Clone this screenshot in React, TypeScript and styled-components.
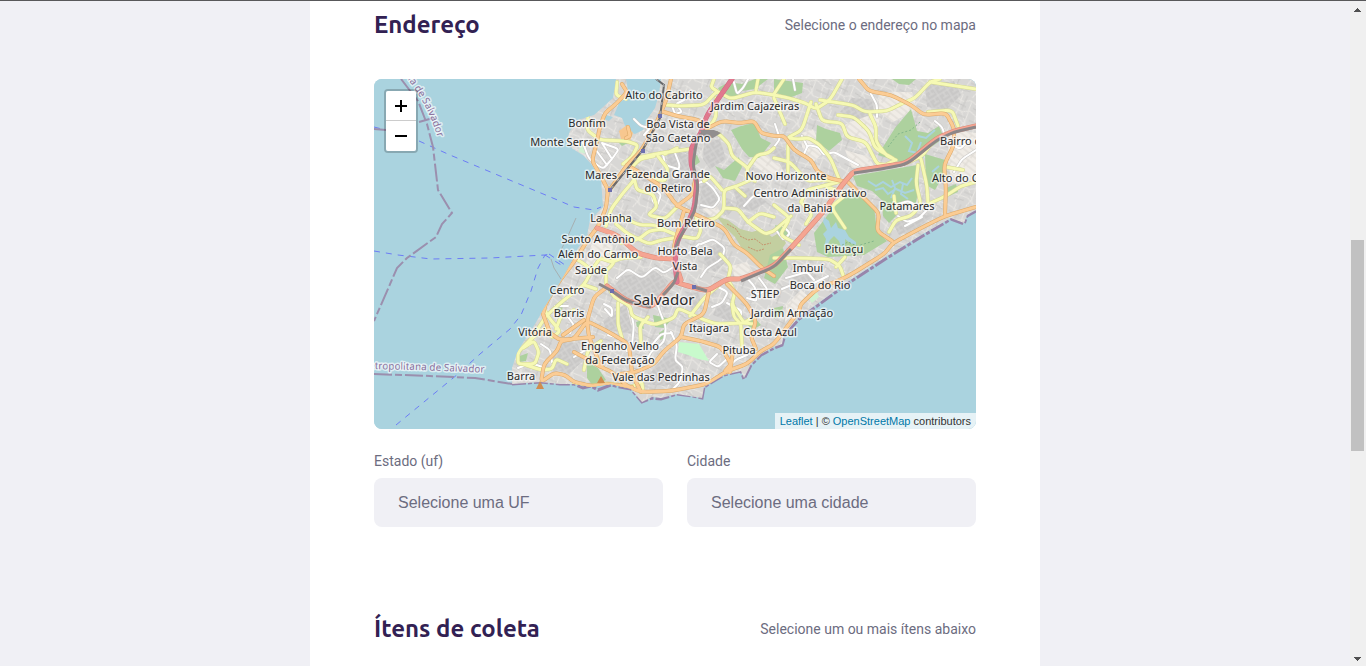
import React from "react";
import styled, { createGlobalStyle } from "styled-components";

const GlobalStyle = createGlobalStyle`
  *, *::before, *::after { box-sizing: border-box; }
  body {
    margin: 0;
    background: #f0f0f5;
    color: #6c6c80;
    font-family: Roboto, sans-serif;
    -webkit-font-smoothing: antialiased;
  }
`;

const Page = styled.div`
  display: flex;
  min-height: 100vh;
  border-top: 1px solid #58585a;
`;

const Main = styled.main`
  flex: 1;
  display: flex;
  justify-content: center;
`;

const Form = styled.form`
  width: 100%;
  max-width: 730px;
  padding: 10px 64px 0;
  background: #fff;
`;

const Section = styled.section`
  display: flow-root;
  margin-bottom: 64px;

  &:last-child {
    margin-bottom: 0;
    padding-bottom: 22px;
  }
`;

const SectionHeader = styled.header`
  display: flex;
  justify-content: space-between;
  align-items: center;
  height: 28px;
`;

const Title = styled.h2`
  margin: 0;
  color: #322153;
  font: 700 24px/28px Ubuntu, "Noto Sans", sans-serif;
`;

const Hint = styled.span`
  font-size: 14px;
  line-height: 16px;
`;

const MapFrame = styled.div`
  position: relative;
  height: 350px;
  margin: 40px 0 24px;
  border-radius: 8px;
  overflow: hidden;
  background: #aad3df;
`;

const MapDrawing = styled.svg`
  display: block;
  width: 100%;
  height: 100%;
`;

const ZoomControl = styled.div`
  position: absolute;
  top: 10px;
  left: 10px;
  border: 2px solid rgba(0, 0, 0, 0.2);
  border-radius: 4px;
  background-clip: padding-box;
`;

const ZoomLink = styled.a`
  display: flex;
  align-items: center;
  justify-content: center;
  width: 30px;
  height: 30px;
  background: #fff;
  color: #000;
  text-decoration: none;

  &:first-child {
    border-bottom: 1px solid #ccc;
    border-radius: 2px 2px 0 0;
  }

  &:last-child {
    border-radius: 0 0 2px 2px;
  }
`;

const Attribution = styled.div`
  position: absolute;
  right: 0;
  bottom: 0;
  padding: 0 5px;
  background: rgba(255, 255, 255, 0.7);
  color: #333;
  font: 11px/16px "Liberation Sans", Arial, sans-serif;

  a {
    color: #0078a8;
    text-decoration: none;
  }
`;

const FieldGroup = styled.div`
  display: flex;
  gap: 24px;
  margin-bottom: 24px;
`;

const Field = styled.div`
  flex: 1;
  display: flex;
  flex-direction: column;
  gap: 8px;

  label {
    font-size: 14px;
    line-height: 17px;
  }
`;

const Select = styled.select`
  appearance: none;
  width: 100%;
  height: 49px;
  padding: 0 24px;
  border: 0;
  border-radius: 8px;
  background: #f0f0f5;
  color: #6c6c80;
  font: 16px "Liberation Sans", Arial, sans-serif;
`;

const Scrollbar = styled.div`
  display: flex;
  flex-direction: column;
  align-items: center;
  width: 16px;
  padding: 7px 2px 5px 1px;
  background: #f0f0f0;
`;

const Track = styled.div`
  flex: 1;
  display: grid;
  grid-template-rows: 228fr 211fr 206fr;
  width: 100%;
`;

const Thumb = styled.div`
  grid-row: 2;
  background: #c1c1c1;
`;

const Arrow = ({ down }: { down?: boolean }) => (
  <svg width="7" height="4" viewBox="0 0 7 4" shapeRendering="crispEdges" aria-hidden="true">
    <path d={down ? "M0 0h7v1h-1v1h-1v1h-1v1h-1v-1h-1v-1h-1v-1h-1z" : "M3 0h1v1h1v1h1v1h1v1h-7v-1h1v-1h1v-1h1z"} fill="#505050" />
  </svg>
);

const LAND =
  "M616 79 L613 98 602 108 594 115 578 120 570 131 566 142 573 149 584 156 592 165 601 179 603 207 590 220 587 236 578 248 570 265 557 288 546 305 535 324 524 341 517 353 512 368 512 384 526 383 541 382 560 384 574 384 591 387 611 384 631 389 642 402 652 397 661 398 677 394 702 398 704 387 724 375 741 371 744 378 751 364 761 354 774 347 782 344 784 334 799 317 817 304 847 282 887 256 921 235 951 218 964 223 967 215 976 210 976 79 Z";

const COAST_LINE =
  "M512 384 L541 382 560 384 574 384 583 388 591 386 598 390 611 385 620 387 631 389 642 402 652 398 661 399 677 394 692 396 702 398 704 387 724 375 741 371 744 379 751 365 761 355 774 348 782 345 785 335 799 319 817 306 847 284 887 258 921 237 951 219 964 224 967 216 976 211";

const WATERS = [
  "M626 79 L661 79 659 94 655 108 648 118 643 130 635 134 627 131 622 118 614 115 619 103 629 96 Z",
  "M606 115 L613 117 609 121 604 119 Z",
  "M824 217 l5 4 2 7 5 -6 2 6 7 2 4 7 7 5 0 3 -6 -2 -5 -4 0 8 -3 3 -3 -9 -5 -5 -4 4 -3 6 -3 2 2 -9 -3 -5 4 -4 -4 -8 z",
];

const WOODS = [
  "M731 130 L741 126 754 123 761 138 771 143 759 158 749 157 742 149 735 137 Z",
  "M715 166 L724 170 739 157 742 167 735 181 723 178 Z",
  "M817 125 L826 129 840 133 842 140 829 151 816 141 Z",
  "M911 109 L917 131 928 133 939 126 944 138 920 155 903 163 878 155 883 147 895 128 Z",
  "M853 176 L917 165 919 185 916 203 886 204 872 191 857 186 Z",
  "M925 154 L945 160 943 176 935 190 926 185 Z",
  "M839 200 L853 192 874 207 877 231 887 241 864 255 828 257 817 252 814 233 Z",
  "M587 362 L598 368 606 380 593 386 587 378 Z",
  "M774 79 L803 83 802 93 789 98 774 92 Z",
  "M892 79 L916 79 909 85 899 84 Z",
  "M718 88 L729 82 742 84 755 79 768 79 755 89 742 91 733 99 724 98 Z",
  "M770 255 L783 248 788 267 775 284 764 278 Z",
  "M619 143 L625 139 628 143 622 146 Z",
  "M659 333 L665 329 666 337 660 340 Z",
  "M636 322 L642 320 644 329 637 327 Z",
  "M653 315 L672 319 664 328 655 327 Z",
  "M556 305 L563 304 562 311 556 311 Z",
  "M520 356 L528 353 526 361 519 362 Z",
  "M744 321 L754 317 761 325 752 330 Z",
  "M774 308 L783 306 782 314 774 319 Z",
  "M946 188 L956 184 958 192 949 196 Z",
  "M882 203 L892 204 896 216 889 223 883 216 Z",
  "M690 157 L697 155 700 162 693 167 Z",
  "M775 225 L788 228 790 237 778 236 Z",
];

const SCRUB = [
  "M716 216 L728 220 740 229 752 232 762 229 772 237 780 232 786 243 776 258 766 269 754 259 744 252 735 237 724 226 Z",
];

const OPEN_LAND = [
  "M748 160 L762 151 775 163 789 165 779 174 763 172 Z",
  "M802 133 L813 129 824 152 812 163 802 147 Z",
  "M843 126 L868 113 880 118 874 145 860 149 852 137 Z",
  "M880 92 L912 92 917 109 893 122 878 112 Z",
  "M949 130 L976 133 976 180 952 184 948 160 Z",
  "M845 150 L869 157 874 166 852 168 Z",
  "M731 266 L747 262 754 274 735 278 Z",
  "M617 300 L630 309 633 325 622 322 Z",
  "M698 205 L714 202 722 214 714 219 Z",
  "M786 305 L801 290 808 296 797 311 785 322 Z",
  "M593 240 L613 245 610 266 585 266 Z",
  "M583 139 L589 143 583 149 Z",
];

const DENSE = [
  "M632 163 L643 168 654 184 642 181 Z",
  "M667 148 L688 155 690 184 680 197 668 188 Z",
  "M704 142 L720 139 726 159 710 169 703 159 Z",
  "M609 293 L622 276 655 271 668 281 661 297 644 303 626 300 Z",
  "M703 181 L718 193 716 207 699 209 Z",
  "M733 190 L749 188 767 202 752 211 739 208 Z",
  "M654 368 L670 351 682 361 686 378 665 386 643 384 Z",
  "M603 321 L626 303 633 334 606 330 Z",
  "M771 147 L792 151 798 167 783 170 Z",
  "M852 98 L871 99 875 113 854 121 840 112 Z",
  "M925 85 L954 81 961 95 946 110 927 107 Z",
  "M552 355 L560 341 577 343 584 360 569 374 553 369 Z",
  "M686 292 L699 293 702 307 692 312 Z",
  "M717 304 L735 303 744 317 729 321 713 315 Z",
  "M707 248 L721 242 728 260 715 272 703 263 Z",
  "M893 224 L914 213 933 216 917 228 899 235 Z",
  "M792 278 L807 271 819 276 803 287 Z",
  "M720 213 L726 198 735 207 728 216 Z",
];

const STREETS = [
  "M583 143 L589 159 603 169 612 159 619 149 602 143 M602 143 L612 159 M593 146 L607 165",
  "M634 119 L641 126 650 128 644 135",
  "M672 106 L675 114 682 112 676 104 684 100 M733 79 L737 94 743 88 748 79",
  "M698 183 L705 181 713 188 720 199 713 208 701 205",
  "M654 188 L652 200 657 206 661 195 656 190",
  "M744 206 L753 196 764 194",
  "M804 154 L808 145 818 147 824 155 834 152 845 158 858 165",
  "M871 94 L877 105 877 117 M935 121 L942 127 945 136",
  "M976 150 L962 159 954 172 M947 142 L960 149 968 141",
  "M617 278 L628 269 642 278 655 267 664 273 675 266",
  "M628 302 L634 325 632 345 M656 300 L660 312 666 327 664 342 651 352 646 362",
  "M671 332 L677 345 675 360 683 367 680 382 672 390",
  "M714 285 L728 292 722 303 712 307 M727 303 L742 311 738 324",
  "M604 304 L612 308 612 317 605 309 M541 344 L550 350 552 362 M518 368 L531 363 548 369",
  "M717 354 L709 362 718 367 727 359 M747 355 L735 360 724 374",
  "M701 244 L713 239 725 248 722 259 707 268 701 277 M689 253 L699 244",
  "M781 224 L790 233 785 239 M775 229 L783 239",
  "M896 205 L908 201 919 207 M898 216 L907 222 919 218 926 211 M905 226 L922 217",
  "M782 289 L796 283 812 284 828 276 M786 278 L807 272 814 280",
  "M568 317 L574 325 570 333 M574 357 L584 351 M555 306 L568 306",
  "M675 153 L680 166 674 178 M663 154 L665 165 678 169",
  "M745 276 L755 287 757 301 747 298 M759 278 L768 290 758 294",
  "M608 335 L622 339 627 351 M652 345 L661 334 672 333",
  "M802 136 L807 146 M775 124 L780 139 774 147 M793 79 L795 90",
];

const YELLOW = [
  "M617 82 L616 95 626 99 M588 115 L587 130 600 140 626 141 638 145 632 157 623 164",
  "M666 105 L680 106 704 105 717 91 731 99 755 92 774 95 M714 79 L711 87 718 92 M758 79 L756 90",
  "M704 133 L718 133 729 144 732 156 748 168 746 177 755 181 M704 133 L716 118 716 98",
  "M748 168 L757 155 768 153 774 148 M755 178 L737 186 724 190 724 210 715 219 696 220",
  "M724 208 L738 209 748 222 765 234 774 231 791 216 M748 222 L760 213 774 217",
  "M654 156 L640 159 630 169 635 179 623 193 611 209 606 226 M636 158 L661 153 676 151 690 149",
  "M658 156 L668 169 665 181 650 178 M634 178 L637 190 653 194 657 207 648 215 665 219 678 206",
  "M606 222 L620 216 639 225 655 225 675 235 697 239 701 230 696 217",
  "M774 95 L789 98 805 103 816 109 830 100 842 79 M811 102 L802 130 787 138 798 139 809 138 820 145 831 159 839 179",
  "M816 104 L822 121 842 123 847 137 866 142 877 164 887 165 M820 100 L853 105 865 112 887 111 901 104",
  "M838 115 L854 117 869 131 875 148 896 160 887 164 M774 98 L785 124 M870 114 L876 127 876 142 887 156 896 160",
  "M901 104 L915 98 930 82 940 79 M930 82 L976 89 M928 112 L952 110 958 126",
  "M907 163 L922 156 932 143 M918 165 L916 183 921 205 911 216 896 220 889 232 M921 159 L927 186 928 204 M946 167 L963 170",
  "M928 204 L944 197 961 186 976 182 M896 213 L894 196 M774 158 L790 162 807 181 822 180 842 181 M788 173 L788 145",
  "M842 181 L827 185 807 190 801 202 M801 202 L812 214 806 224 M774 205 L790 218 780 235 799 245",
  "M565 254 L580 261 592 270 605 272 614 263 611 252 M592 270 L584 285 565 299 546 316 532 338 518 352 518 364 535 364 539 352 534 341 523 348",
  "M607 285 L614 297 630 306 632 316 654 325 674 318 678 308 702 319 716 324 744 323 754 324",
  "M618 303 L618 325 622 338 M544 309 L550 319 560 331 552 338 546 327 530 340 M574 310 L561 316 556 329",
  "M523 364 L541 370 552 369 556 359 567 364 M574 384 L591 386 608 383 631 387 642 382 643 392 M584 370 L588 350 601 341",
  "M720 254 L731 266 728 280 735 292 732 304 744 323 750 319 M732 304 L734 317 741 324 742 347",
  "M774 258 L799 258 829 259 840 266 844 278 M845 257 L836 267 M648 317 L640 326 641 344",
  "M616 224 L628 234 649 244 662 240 674 238 M677 235 L662 229 649 231 639 239 621 243",
  "M704 181 L710 176 722 190 M735 187 L745 196 M665 154 L677 148",
  "M784 79 L774 94 M845 228 L831 207 847 194 827 187",
  "M592 270 L600 258 612 262 622 258 641 257 M606 272 L606 285 M584 285 L596 289 M690 316 L704 298 720 284",
];

const ORANGE = [
  "M622 84 L627 92 617 103 605 113 600 127 597 141 592 161 602 178 608 190 606 208 599 225 587 241 574 262 560 280 546 303 543 314",
  "M671 79 L666 101 654 128 641 151 627 165 611 188",
  "M664 112 L677 116 699 120 706 129 722 121 740 123 754 121 761 133 774 136 784 136 794 150 811 160 817 171 829 178 842 181",
  "M627 165 L644 175 664 188 677 206 697 215 724 228 734 245 747 253 761 267 774 276",
  "M677 206 L692 195 695 181 M684 211 L674 245 675 258",
  "M859 79 L869 91 891 95 911 105 924 115 946 113 954 128 954 145 944 165 946 188 945 214",
  "M847 181 L864 198 879 213 877 231 892 241",
  "M976 207 L945 216 921 228 893 243 884 254 847 277 817 289 801 304 799 311 774 344 761 351 747 364 727 371 707 384 671 391 641 392 627 386 612 372 601 367 589 337 587 321 594 297 607 287",
  "M632 387 L610 384 591 386 574 382 565 375 554 373 541 382 544 364 557 351 561 341 574 339 587 321 607 331 629 344 632 374 641 392",
  "M620 374 L636 372 654 364 664 351 681 337 684 324 704 314 709 291",
  "M681 337 L701 341 721 347 731 364 725 371 M733 350 L730 373",
  "M727 284 L747 304 756 321 751 337 756 349",
  "M543 314 L550 333 560 340 593 337 M529 334 L550 333 M563 335 L584 320",
  "M574 352 L587 359 601 367 M626 138 L630 136 628 127",
];

const SALMON = [
  "M597 228 L617 235 637 253 656 258 674 259 681 280",
  "M976 126 L954 131 937 138 907 163 881 167 854 171 842 185 824 211 791 248 774 266 741 279 727 279 707 291 681 284 674 281 661 297 651 307 627 301 607 286",
];

const MOTORWAY = ["M732 79 L707 115 701 133 691 148 691 165 697 181 694 211 677 241 675 264 677 282"];

const TRANSIT = [
  "M701 133 L696 144 693 165 698 186 695 211 679 239 675 250 M701 133 L718 133",
  "M976 127 L954 132 937 140 907 164 881 169 854 173 M791 249 L774 267 741 281 M707 291 L694 287 M678 272 L674 283 663 295 M651 307 L627 301 612 291 599 284",
];

const RAIL = "M656 79 L664 85 660 118 642 151 610 190";

const STATIONS: [number, number][] = [[660, 116], [643, 151], [610, 190], [612, 291], [694, 287]];

const STREAMS =
  "M868 181 l8 5 7 -4 8 5 9 -5 7 3 5 -7 M875 190 l8 -2 5 6 8 -5 9 4 9 -3 M892 180 l3 8 -4 10 M903 184 l-2 10 7 5 M905 136 l7 7 -3 8 8 2 M921 142 l-3 8 5 8 M935 130 l-9 8 -8 -2 M932 172 l7 -6";

const FERRIES = [
  "M374 127 L386 130 M419 141 L450 155 500 176 548 196 574 207 594 210 601 207",
  "M374 251 L398 255 431 259 490 258 545 255 551 254 M545 255 L563 266",
  "M396 425 L430 397 458 374 480 354 510 329 521 315 531 291 538 268 545 255",
  "M549 254 L565 265",
];

const BORDERS = [
  "M401 79 L418 101 427 124 433 147 438 190 452 213 442 224 436 237 407 258 397 268 374 321",
  "M374 374 L430 376 475 378 512 384",
  "M374 129 L386 130 M419 122 L433 118",
];

const LABELS: [string, number, number][] = [
  ["Alto do Cabrito", 664, 99],
  ["Jardim Cajazeiras", 755, 110],
  ["Bonfim", 587, 127],
  ["Boa Vista de", 678, 128],
  ["São Caetano", 678, 142],
  ["Monte Serrat", 564, 146],
  ["Mares", 601, 179],
  ["Fazenda Grande", 668, 178],
  ["do Retiro", 668, 192],
  ["Novo Horizonte", 786, 180],
  ["Centro Administrativo", 810, 197],
  ["da Bahia", 810, 212],
  ["Patamares", 907, 210],
  ["Lapinha", 611, 222],
  ["Bom Retiro", 686, 227],
  ["Santo Antônio", 598, 243],
  ["Além do Carmo", 598, 258],
  ["Saúde", 591, 274],
  ["Horto Bela", 685, 255],
  ["Vista", 685, 270],
  ["Pituaçu", 844, 253],
  ["Imbuí", 808, 272],
  ["Centro", 567, 294],
  ["Boca do Rio", 820, 289],
  ["STIEP", 765, 298],
  ["Barris", 569, 317],
  ["Jardim Armação", 792, 317],
  ["Vitória", 535, 336],
  ["Itaigara", 709, 332],
  ["Costa Azul", 770, 336],
  ["Engenho Velho", 620, 350],
  ["da Federação", 620, 364],
  ["Pituba", 739, 354],
  ["Barra", 521, 380],
  ["Vale das Pedrinhas", 661, 381],
];

const Label = styled.text<{ $size?: number; $tone?: string }>`
  fill: ${(p) => p.$tone ?? "#2b2b2b"};
  font-family: "Noto Sans", sans-serif;
  font-size: ${(p) => p.$size ?? 11}px;
  stroke: rgba(255, 255, 255, 0.6);
  stroke-width: 3px;
  stroke-linejoin: round;
  paint-order: stroke;
`;

/** Rounds the corners of "M x y L x y x y ..." polylines with quadratic curves. */
function smooth(paths: string[]) {
  return paths
    .join(" ")
    .split("M")
    .filter((part) => part.trim())
    .map((part) => {
      const n = (part.match(/-?\d+/g) ?? []).map(Number);
      const last = n.length - 2;
      let d = `M${n[0]} ${n[1]}`;
      for (let i = 2; i < last; i += 2) {
        // Straight to a quarter before the corner, then round it.
        const ax = n[i] + (n[i - 2] - n[i]) / 4;
        const ay = n[i + 1] + (n[i - 1] - n[i + 1]) / 4;
        const bx = n[i] + (n[i + 2] - n[i]) / 4;
        const by = n[i + 1] + (n[i + 3] - n[i + 1]) / 4;
        d += `L${ax} ${ay}Q${n[i]} ${n[i + 1]} ${bx} ${by}`;
      }
      return `${d}L${n[last]} ${n[last + 1]}`;
    })
    .join("");
}

function Shapes({ paths, fill }: { paths: string[]; fill: string }) {
  return <path d={paths.join(" ")} fill={fill} />;
}

function Roads({ paths, casing, color, width }: { paths: string[]; casing: string; color: string; width: number }) {
  const d = smooth(paths);
  return (
    <g fill="none" strokeLinecap="round" strokeLinejoin="round">
      <path d={d} stroke={casing} strokeWidth={width + 1} />
      <path d={d} stroke={color} strokeWidth={width} />
    </g>
  );
}

function CityMap() {
  return (
    <MapDrawing viewBox="374 79 602 350" preserveAspectRatio="xMidYMid slice" role="img" aria-label="Mapa de Salvador">
      <defs>
        <pattern id="blocks" width="38" height="34" patternUnits="userSpaceOnUse" patternTransform="rotate(24)">
          <rect width="38" height="34" fill="#d8d7d5" />
          <path d="M0 5 L9 7 16 3 27 6 38 5 M0 15 L12 17 19 13 31 17 38 15 M0 27 L14 25 22 29 38 27 M6 0 L8 17 4 34 M17 3 L19 25 16 34 M29 0 L27 17 31 34 M12 17 L22 29 M27 6 L38 15" fill="none" stroke="#eae8e4" />
          <path d="M2 10 L14 11 M21 9 L35 12 M9 21 L18 21 M22 22 L36 22 M2 31 L12 29 M11 0 L11 15 M34 16 L35 30" fill="none" stroke="#c8c7c5" />
        </pattern>
        <pattern id="alleys" width="11" height="9" patternUnits="userSpaceOnUse" patternTransform="rotate(-32)">
          <rect width="11" height="9" fill="#c9c8c7" />
          <path d="M0 2 H11 M0 7 H6 M3 2 V7 M8 0 V9" fill="none" stroke="#d8d7d5" />
        </pattern>
        <pattern id="dunes" width="13" height="11" patternUnits="userSpaceOnUse" patternTransform="rotate(38)">
          <path d="M0 3 H13 M4 3 V11 M0 8 H13" fill="none" stroke="#dcd8d2" />
        </pattern>
        <clipPath id="land">
          <path d={LAND} />
        </clipPath>
        <path id="baia" d="M405 76 Q430 106 440 146" />
        <path id="regiao" d="M369 369 L420 370 490 373" />
      </defs>

      <rect x="374" y="79" width="602" height="350" fill="#aad3df" />
      <path d="M576 218 L567 238 560 252 M551 259 L554 268 561 279" fill="none" stroke="#a6b0b2" />
      <path d={COAST_LINE} fill="none" stroke="#9885ab" strokeWidth="3" strokeDasharray="14 2 4 2" />
      <path d={LAND} fill="url(#blocks)" />

      <g clipPath="url(#land)">
        <Shapes paths={OPEN_LAND} fill="#f0ece6" />
        <Shapes paths={OPEN_LAND} fill="url(#dunes)" />
        <Shapes paths={DENSE} fill="url(#alleys)" />
        <Shapes paths={SCRUB} fill="#c3cfa0" />
        <Shapes paths={WOODS} fill="#add19e" />
        <path d="M679 342 L699 344 709 361 698 359 688 355 678 352 Z" fill="#c8facc" />
        <path d="M580 143 L586 147 587 154 579 152 Z M808 298 L817 292 819 297 812 303 Z" fill="#d0f2d2" />
        <Shapes paths={WATERS} fill="#aad3df" />
        <path d={STREAMS} fill="none" stroke="#aad3df" strokeWidth="2" />
        <path d="M740 236 l8 4 7 -1 8 6 8 -2 M748 247 l9 4 7 -2 M727 224 l9 5 4 6" fill="none" stroke="#c5936d" strokeDasharray="2 1" />
        <path d="M835 249 l13 -7 9 4 17 -5 M920 122 l-9 8 -13 4 -10 13" fill="none" stroke="#83b58a" strokeDasharray="2 2" />
        <Roads paths={STREETS} casing="#c9c7c4" color="#fff" width={2} />
        <path d="M619 131 L627 125 633 133 630 141 621 139 Z" fill="#f7c78f" />
        <Roads paths={YELLOW} casing="#d2d694" color="#f6f9b4" width={3} />
        <Roads paths={ORANGE} casing="#dba868" color="#fbcc94" width={3} />
        <Roads paths={SALMON} casing="#da8b78" color="#f5a592" width={4} />
        <Roads paths={MOTORWAY} casing="#cc6b82" color="#e0788e" width={4} />
      </g>

      <path d={smooth(TRANSIT)} fill="none" stroke="#8d8788" strokeWidth="3" strokeLinejoin="round" />
      <path d="M700 130 L714 130 721 133 713 138 704 137 Z" fill="#918e8e" />
      <path d={RAIL} fill="none" stroke="#68686b" strokeWidth="2" />
      <path d={RAIL} fill="none" stroke="#bbb" strokeDasharray="3 6" />
      {STATIONS.map(([x, y]) => (
        <rect key={`${x}-${y}`} x={x - 2} y={y - 2} width="4" height="4" fill="#6c6fae" />
      ))}
      <path d="M540 381 l4 8 h-8 z M601 376 l4 7 h-8 z" fill="#cf8d50" />

      <path d={FERRIES.join(" ")} fill="none" stroke="#6c7cf5" strokeDasharray="6 6" />
      <path d={BORDERS.join(" ")} fill="none" stroke="#9b8fae" strokeWidth="2" strokeDasharray="18 3 7 3" />

      <Label $size={10} $tone="#8a6f9c">
        <textPath href="#baia">ria de Salvador</textPath>
      </Label>
      <Label $size={10} $tone="#8a6f9c">
        <textPath href="#regiao">etropolitana de Salvador</textPath>
      </Label>
      {LABELS.map(([name, x, y]) => (
        <Label key={name} x={x} y={y} textAnchor="middle">
          {name}
        </Label>
      ))}
      <Label x="664" y="305" textAnchor="middle" $size={15}>
        Salvador
      </Label>
      <Label x="940" y="145">Bairro da Paz</Label>
      <Label x="932" y="182">Alto do Coqueirinho</Label>
    </MapDrawing>
  );
}

export default function App() {
  return (
    <Page>
      <GlobalStyle />
      <Main>
        <Form>
          <Section>
            <SectionHeader>
              <Title>Endereço</Title>
              <Hint>Selecione o endereço no mapa</Hint>
            </SectionHeader>
            <MapFrame>
              <CityMap />
              <ZoomControl>
                <ZoomLink href="#zoom-in" aria-label="Zoom in">
                  <svg width="12" height="12" viewBox="0 0 12 12" aria-hidden="true">
                    <path d="M0 6h12M6 0v12" stroke="#000" strokeWidth="2" />
                  </svg>
                </ZoomLink>
                <ZoomLink href="#zoom-out" aria-label="Zoom out">
                  <svg width="12" height="12" viewBox="0 0 12 12" aria-hidden="true">
                    <path d="M0 6h12" stroke="#000" strokeWidth="2" />
                  </svg>
                </ZoomLink>
              </ZoomControl>
              <Attribution>
                <a href="#leaflet">Leaflet</a> | © <a href="#openstreetmap">OpenStreetMap</a> contributors
              </Attribution>
            </MapFrame>
            <FieldGroup>
              <Field>
                <label htmlFor="uf">Estado (uf)</label>
                <Select id="uf" name="uf">
                  <option>Selecione uma UF</option>
                </Select>
              </Field>
              <Field>
                <label htmlFor="city">Cidade</label>
                <Select id="city" name="city">
                  <option>Selecione uma cidade</option>
                </Select>
              </Field>
            </FieldGroup>
          </Section>
          <Section>
            <SectionHeader>
              <Title>Ítens de coleta</Title>
              <Hint>Selecione um ou mais ítens abaixo</Hint>
            </SectionHeader>
          </Section>
        </Form>
      </Main>
      <Scrollbar aria-hidden="true">
        <Arrow />
        <Track>
          <Thumb />
        </Track>
        <Arrow down />
      </Scrollbar>
    </Page>
  );
}
